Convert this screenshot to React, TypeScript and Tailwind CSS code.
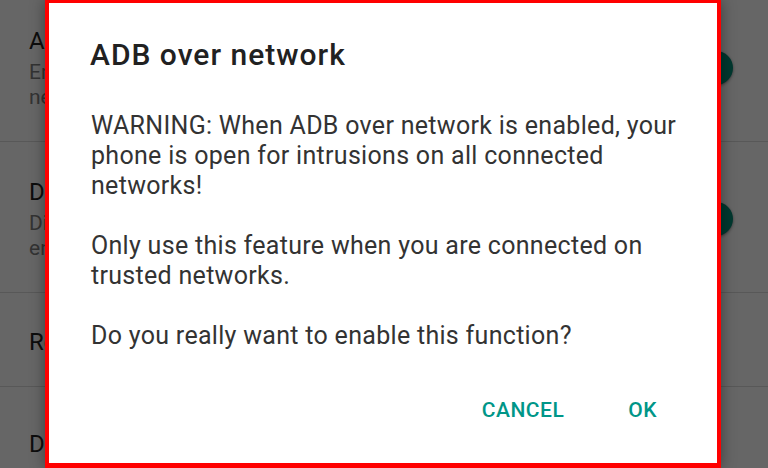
import React from "react";

const FONT = { fontFamily: 'Roboto, "Noto Sans", "Liberation Sans", sans-serif' };

type Row = {
  title: string;
  lines: string[];
  toggle?: boolean;
  pad: string;
};

const ROWS: Row[] = [
  {
    title: "ADB over network",
    lines: ["Enable debugging over TCP/IP on all", "network interfaces (Wi-Fi, Ethernet)"],
    toggle: true,
    pad: "pt-[35px] pb-[31px]",
  },
  {
    title: "Disable permission monitoring",
    lines: ["Disable permission monitoring when", "enabling USB debugging over ADB"],
    toggle: true,
    pad: "pt-[35px] pb-[31px]",
  },
  {
    title: "Revoke USB debugging authorizations",
    lines: [],
    pad: "pt-[34px] pb-[29px]",
  },
  {
    title: "Default USB configuration",
    lines: ["apply the selected mode on connect"],
    pad: "pt-[42px] pb-[31px]",
  },
];

function SettingRow({ row, last }: { row: Row; last: boolean }) {
  return (
    <div
      className={`flex items-center pl-[29px] pr-[35px] ${row.pad} ${
        last ? "" : "border-b border-[#585858]"
      }`}
    >
      <div className="flex-1 min-w-0">
        <div className="text-[24px] leading-[30px] text-[#0d0d0d] whitespace-nowrap">
          {row.title}
        </div>
        {row.lines.length > 0 ? (
          <div className="mt-[4px] text-[21px] leading-[25px] text-[#333333]">
            {row.lines.map((l) => (
              <div key={l} className="whitespace-nowrap">
                {l}
              </div>
            ))}
          </div>
        ) : null}
      </div>
      {row.toggle ? (
        <span className="block w-[34px] h-[34px] rounded-full bg-[#00382f] shadow-[0_1px_3px_rgba(0,0,0,0.45)]" />
      ) : null}
    </div>
  );
}

const BTN =
  "px-4 text-[21px] leading-[24px] font-medium tracking-[0.5px] text-[#009688] uppercase";

export default function App() {
  return (
    <div
      className="relative w-[768px] h-[468px] overflow-hidden bg-[#666666]"
      style={FONT}
    >
      <div className="mt-[-9px]">
        {ROWS.map((r, i) => (
          <SettingRow key={r.title} row={r} last={i === ROWS.length - 1} />
        ))}
      </div>

      <div className="absolute left-[45px] top-0 w-[676px] h-[468px] bg-white border-x-4 border-t-[3px] border-b-[5px] border-[#ff0000] shadow-[0_0_14px_rgba(0,0,0,0.4)] flex flex-col">
        <h2 className="pl-[41px] pt-[34px] text-[30px] leading-[36px] font-medium tracking-[1px] text-[#212121]">
          ADB over network
        </h2>

        <div className="mt-[38px] pl-[42px] pr-[20px] text-[25px] leading-[30px] tracking-[0.3px] text-[#333333]">
          <p>
            WARNING: When ADB over network is enabled, your
            <br />
            phone is open for intrusions on all connected
            <br />
            networks!
          </p>
          <p className="mt-[30px]">
            Only use this feature when you are connected on
            <br />
            trusted networks.
          </p>
          <p className="mt-[30px]">Do you really want to enable this function?</p>
        </div>

        <div className="mt-[47px] flex justify-end gap-[32px] pr-[44px]">
          <button type="button" className={BTN}>
            Cancel
          </button>
          <button type="button" className={BTN}>
            OK
          </button>
        </div>
      </div>
    </div>
  );
}
